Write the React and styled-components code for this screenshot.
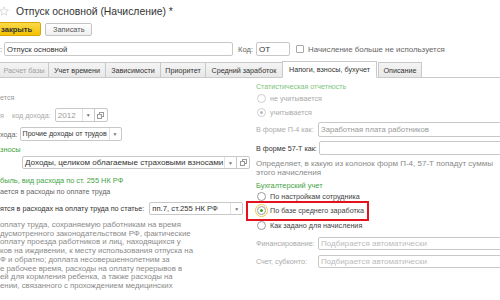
import React from 'react'
import styled, { createGlobalStyle } from 'styled-components'

const GlobalStyle = createGlobalStyle`
  html, body { margin: 0; padding: 0; background: #fff; }
  body {
    font-family: "Liberation Sans", Arial, sans-serif;
    font-size: 7.2px;
    color: #4d4d4d;
    overflow: hidden;
  }
`

const Page = styled.div`
  width: 500px;
  height: 300px;
  overflow: hidden;
`

const TitleRow = styled.div`
  display: flex;
  align-items: center;
  gap: 7px;
  height: 14px;
  margin-top: 4px;
`

const Title = styled.h1`
  margin: 0;
  font-size: 10.4px;
  font-weight: normal;
  color: #333;
  white-space: nowrap;
`

const Toolbar = styled.div`
  display: flex;
  align-items: center;
  gap: 4px;
  height: 14px;
  margin-top: 4px;
`

const PrimaryButton = styled.button`
  height: 14px;
  margin-left: -6px;
  padding: 0 8px 0 6px;
  border: 1px solid #d9a800;
  border-radius: 2px;
  background: linear-gradient(#fbd94a, #f2c200);
  font: bold 7.6px "Liberation Sans", Arial, sans-serif;
  color: #333;
`

const Button = styled.button`
  height: 13px;
  width: 47px;
  padding: 0;
  border: 1px solid #c4c4c4;
  border-radius: 2px;
  background: linear-gradient(#fff, #efefef);
  font: 7.4px "Liberation Sans", Arial, sans-serif;
  color: #555;
`

const FieldRow = styled.div`
  display: flex;
  align-items: center;
  height: ${p => p.$h || 14}px;
  margin-top: ${p => p.$mt || 0}px;
`

const Label = styled.span`
  white-space: nowrap;
  font-size: ${p => p.$size ? `${p.$size}px` : 'inherit'};
  color: ${p => p.$tone === 'muted' ? '#aaa' : p.$tone === 'dark' ? '#333' : '#666'};
  width: ${p => p.$w ? `${p.$w}px` : 'auto'};
  margin-left: ${p => p.$ml || 0}px;
  flex: none;
`

const Field = styled.div`
  display: flex;
  align-items: stretch;
  box-sizing: border-box;
  height: 100%;
  width: ${p => p.$w}px;
  margin-left: ${p => p.$ml || 0}px;
  flex: none;
  border: 1px solid #c8c8c8;
  border-radius: 2px;
  background: #fff;
`

const FieldText = styled.span`
  flex: 1;
  display: flex;
  align-items: center;
  padding: 0 1px 0 2px;
  overflow: hidden;
  white-space: nowrap;
  font-size: ${p => p.$size || 7.7}px;
  color: ${p => p.$tone === 'muted' ? '#999' : p.$tone === 'hint' ? '#bbb' : '#333'};
`

const DropButton = styled.span`
  width: 11px;
  flex: none;
  display: flex;
  align-items: center;
  justify-content: center;
  border-left: 1px solid #e2e2e2;
  color: #777;
  font-size: 5px;
`

const OpenButton = styled.span`
  width: 12px;
  flex: none;
  display: flex;
  align-items: center;
  justify-content: center;
  border-left: 1px solid #c8c8c8;
`

const CheckBox = styled.span`
  width: 8px;
  height: 8px;
  box-sizing: border-box;
  border: 1px solid #a8a8a8;
  border-radius: 1px;
  margin-left: 6px;
  margin-right: 4px;
  flex: none;
`

const TabBar = styled.div`
  display: flex;
  align-items: flex-end;
  height: 16px;
  margin-top: 5px;
  border-bottom: 1px solid #c9c9c9;
`

const Tab = styled.div`
  box-sizing: border-box;
  width: ${p => p.$w}px;
  height: ${p => p.$active ? 17 : 15}px;
  margin-left: ${p => p.$ml || 0}px;
  margin-right: -1px;
  margin-bottom: ${p => p.$active ? -1 : 0}px;
  display: flex;
  align-items: center;
  justify-content: center;
  border: 1px solid #c9c9c9;
  border-bottom: ${p => p.$active ? '1px solid #fff' : 'none'};
  background: ${p => p.$active ? '#fff' : 'linear-gradient(#f4f4f4, #e8e8e8)'};
  color: ${p => p.$dim ? '#a0a0a0' : '#333'};
  white-space: nowrap;
  flex: none;
`

const Body = styled.div`
  display: grid;
  grid-template-columns: 256px 1fr;
`

const Column = styled.div`
  display: flex;
  flex-direction: column;
  min-width: 0;
`

const Text = styled.div`
  height: ${p => p.$h || 10}px;
  margin-top: ${p => p.$mt || 0}px;
  display: flex;
  align-items: center;
  white-space: nowrap;
  color: ${p => p.$tone === 'muted' ? '#999' : p.$tone === 'dark' ? '#333' : '#666'};
`

const GroupTitle = styled(Text)`
  font-size: ${p => p.$size || 7.4}px;
  color: ${p => p.$dim ? '#7cc47c' : '#3fa33f'};
`

const Note = styled.p`
  margin: ${p => p.$mt || 0}px 0 0;
  font-size: ${p => p.$size || 8}px;
  line-height: ${p => p.$lh || 9}px;
  color: #8a8a8a;
  white-space: nowrap;
`

const RadioRow = styled.div`
  position: relative;
  display: flex;
  align-items: center;
  gap: 4px;
  height: 12px;
  margin-top: ${p => p.$mt || 0}px;
  padding-left: 1px;
  white-space: nowrap;
  color: ${p => p.$disabled ? '#aaa' : '#444'};
`

const RadioCircle = styled.span`
  width: 9px;
  height: 9px;
  box-sizing: border-box;
  border-radius: 50%;
  border: 1px solid ${p => p.$disabled ? '#cfcfcf' : '#9a9a9a'};
  background: #fff;
  display: flex;
  align-items: center;
  justify-content: center;
  flex: none;
  outline: ${p => p.$focus ? '1px solid #f0c64a' : 'none'};
  outline-offset: 1px;
  &::after {
    content: '';
    display: ${p => p.$dot ? 'block' : 'none'};
    width: 3px;
    height: 3px;
    border-radius: 50%;
    background: ${p => p.$dot};
  }
`

const Highlight = styled.span`
  position: absolute;
  left: -10px;
  top: -3px;
  width: 123px;
  height: 20px;
  box-sizing: border-box;
  border: 2.5px solid #e3121c;
  pointer-events: none;
`

const Star = () => (
  <svg width="10" height="10" viewBox="0 0 24 24" style={{ marginLeft: -1 }}>
    <path d="M12 2l3 6.9 7.5.7-5.7 5 1.7 7.4L12 18.1 5.5 22l1.7-7.4-5.7-5 7.5-.7z"
      fill="none" stroke="#c8c8c8" strokeWidth="1.6" strokeLinejoin="round" />
  </svg>
)

const OpenIcon = () => (
  <svg width="7" height="7" viewBox="0 0 7 7">
    <rect x="2.5" y="0.5" width="4" height="4" fill="none" stroke="#999" />
    <rect x="0.5" y="2.5" width="4" height="4" fill="#fff" stroke="#999" />
  </svg>
)

const Drop = () => <DropButton>▼</DropButton>

const Radio = ({ label, dot, disabled, focus, mt, highlight }) => (
  <RadioRow $mt={mt} $disabled={disabled}>
    {highlight && <Highlight />}
    <RadioCircle $dot={dot} $disabled={disabled} $focus={focus} />
    {label}
  </RadioRow>
)

const tabs = [
  { title: 'Расчет базы', w: 50, dim: true },
  { title: 'Учет времени', w: 58 },
  { title: 'Зависимости', w: 56 },
  { title: 'Приоритет', w: 46 },
  { title: 'Средний заработок', w: 78 },
  { title: 'Напоги, взносы, бухучет', w: 95, active: true },
  { title: 'Описание', w: 44, ml: 2 },
]

const note = [
  'оплату труда, сохраняемую работникам на время',
  'дусмотренного законодательством РФ, фактические',
  'оплату проезда работников и лиц, находящихся у',
  'ков на иждивении, к месту использования отпуска на',
  'Ф и обратно; доплата несовершеннолетним за',
  'е рабочее время, расходы на оплату перерывов в',
  'ей для кормления ребенка, а также расходы на',
  'ении, связанного с прохождением медицинских',
]

export default function App() {
  return (
    <Page>
      <GlobalStyle />
      <TitleRow>
        <Star />
        <Title>Отпуск основной (Начисление) *</Title>
      </TitleRow>

      <Toolbar>
        <PrimaryButton>закрыть</PrimaryButton>
        <Button>Записать</Button>
      </Toolbar>

      <FieldRow $mt={6}>
        <Label $w={4}>:</Label>
        <Field $w={229}><FieldText>Отпуск основной</FieldText></Field>
        <Label $ml={5} $size={7.6}>Код:</Label>
        <Field $w={34} $ml={3}><FieldText $size={8}>ОТ</FieldText></Field>
        <CheckBox />
        <Label $size={7.9}>Начисление больше не используется</Label>
      </FieldRow>

      <TabBar>
        {tabs.map((t, i) => (
          <Tab key={t.title} $w={t.w} $active={t.active} $dim={t.dim} $ml={i === 0 ? -1 : t.ml}>
            {t.title}
          </Tab>
        ))}
      </TabBar>

      <Body>
        <Column>
          <Text $mt={14} $tone="muted">ется</Text>
          <FieldRow $mt={6}>
            <Label $tone="muted">я</Label>
            <Label $tone="muted" $ml={8}>код дохода:</Label>
            <Field $w={53} $ml={4}>
              <FieldText $tone="muted" $size={8}>2012</FieldText>
              <Drop />
              <OpenButton><OpenIcon /></OpenButton>
            </Field>
          </FieldRow>
          <FieldRow $mt={5}>
            <Label>хода:</Label>
            <Field $w={102} $ml={2}>
              <FieldText $size={7.1}>Прочие доходы от трудов</FieldText>
              <Drop />
            </Field>
          </FieldRow>
          <GroupTitle $mt={3}>зносы</GroupTitle>
          <FieldRow $mt={2} $h={13}>
            <Field $w={228} $ml={22}>
              <FieldText $size={8.1}>Доходы, целиком облагаемые страховыми взносами</FieldText>
              <Drop />
              <OpenButton><OpenIcon /></OpenButton>
            </Field>
          </FieldRow>
          <GroupTitle $mt={6}>быль, вид расхода по ст. 255 НК РФ</GroupTitle>
          <Text $mt={1}>ается в расходы по оплате труда</Text>
          <FieldRow $mt={6} $h={13}>
            <Label $tone="dark">ятся в расходах на оплату труда по статье:</Label>
            <Field $w={94} $ml={5}>
              <FieldText>пп.7, ст.255 НК РФ</FieldText>
              <Drop />
            </Field>
          </FieldRow>
          <Note $mt={6} $lh={8.7} $size={7.8}>
            {note.map(line => <React.Fragment key={line}>{line}<br /></React.Fragment>)}
          </Note>
        </Column>

        <Column>
          <GroupTitle $mt={4} $dim $size={7.1}>Статистическая отчетность</GroupTitle>
          <Radio label="не учитывается" disabled />
          <Radio label="учитывается" disabled dot="#b8b8b8" mt={2} />
          <FieldRow $mt={4} $h={15}>
            <Label $tone="muted" $w={62}>В форме П-4 как:</Label>
            <Field $w={200}><FieldText $tone="muted">Заработная плата работников</FieldText></Field>
          </FieldRow>
          <FieldRow $mt={4}>
            <Label $tone="dark" $w={63}>В форме 57-Т как:</Label>
            <Field $w={200}><FieldText /></Field>
          </FieldRow>
          <Note $mt={4}>
            Определяет, в какую из колонок форм П-4, 57-Т попадут суммы<br />
            этого начисления
          </Note>
          <GroupTitle $mt={3}>Бухгалтерский учет</GroupTitle>
          <Radio label="По настройкам сотрудника" />
          <Radio label="По базе среднего заработка" dot="#2fa82f" focus highlight mt={2} />
          <Radio label="Как задано для начисления" mt={3} />
          <FieldRow $mt={6} $h={13}>
            <Label $tone="muted" $w={62}>Финансирование:</Label>
            <Field $w={200}><FieldText $tone="hint" $size={8}>Подбирается автоматически</FieldText></Field>
          </FieldRow>
          <FieldRow $mt={5} $h={13}>
            <Label $tone="muted" $w={62}>Счет, субконто:</Label>
            <Field $w={200}><FieldText $tone="hint" $size={8}>Подбирается автоматически</FieldText></Field>
          </FieldRow>
        </Column>
      </Body>
    </Page>
  )
}
